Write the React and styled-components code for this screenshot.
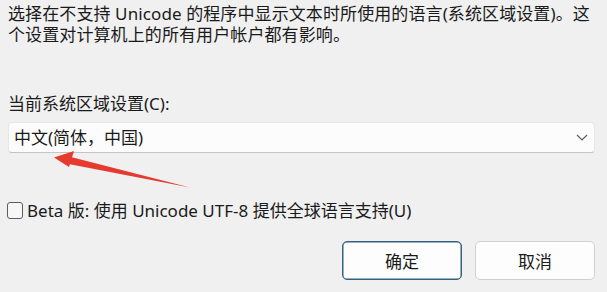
import React, { useState } from 'react';
import styled, { createGlobalStyle } from 'styled-components';

const GlobalStyle = createGlobalStyle`
  html, body {
    margin: 0;
    padding: 0;
    background: #f0f0f0;
  }
  body {
    font-family: "Noto Sans", "Noto Sans CJK SC", sans-serif;
    color: #1a1a1a;
  }
`;

// Dialog body
const Dialog = styled.div`
  position: relative;
  width: 607px;
  height: 292px;
  box-sizing: border-box;
  padding: 3px 12px 0 8px;
  background: #f0f0f0;
  font-size: 17px;
  overflow: hidden;
`;

const Description = styled.p`
  margin: 0;
  line-height: 21px;
  white-space: nowrap;
  letter-spacing: 0.1px;
`;

const FieldLabel = styled.label`
  display: block;
  margin-top: 48px;
  line-height: 21px;
`;

const Select = styled.div`
  display: flex;
  align-items: center;
  justify-content: space-between;
  box-sizing: border-box;
  height: 31px;
  margin-top: 8px;
  padding: 0 6px 0 5px;
  background: #fcfcfc;
  border: 1px solid #e6e6e6;
  border-bottom-color: #c4c4c4;
  border-radius: 4px;
  line-height: 21px;
`;

const CheckRow = styled.label`
  display: flex;
  align-items: center;
  gap: 4px;
  margin-top: 47px;
  height: 21px;
  line-height: 21px;
  cursor: pointer;
`;

const Box = styled.span`
  width: 16px;
  height: 17px;
  margin-left: -1px;
  box-sizing: border-box;
  border: 1px solid #5c5c5c;
  border-radius: 3px;
  background: ${(p) => (p.checked ? '#005fb8' : '#f6f6f6')};
`;

const ButtonRow = styled.div`
  display: flex;
  justify-content: flex-end;
  gap: 13px;
  margin-top: 20px;
`;

const Button = styled.button`
  width: 120px;
  height: 39px;
  box-sizing: border-box;
  border-radius: 5px;
  border: 1px solid ${(p) => (p.primary ? '#33627f' : '#d0d0d0')};
  box-shadow: ${(p) => (p.primary ? 'inset 0 0 0 0.5px #33627f' : 'none')};
  background: #fdfdfd;
  font-family: inherit;
  font-size: 17px;
  color: #1a1a1a;
  padding: 0;
`;

// red annotation arrow drawn over the dialog
const ArrowLayer = styled.svg`
  position: absolute;
  left: 0;
  top: 0;
  pointer-events: none;
`;

const Chevron = () => (
  <svg width="12" height="7" viewBox="0 0 12 7">
    <path d="M1 1 L6 6 L11 1" fill="none" stroke="#5a5a5a" strokeWidth="1.1" />
  </svg>
);

const App = () => {
  const [checked, setChecked] = useState(false);

  return (
    <>
      <GlobalStyle />
      <Dialog>
        <Description>
          选择在不支持 Unicode 的程序中显示文本时所使用的语言(系统区域设置)。这
          <br />
          个设置对计算机上的所有用户帐户都有影响。
        </Description>

        <FieldLabel>当前系统区域设置(C):</FieldLabel>
        <Select>
          <span>中文(简体，中国)</span>
          <Chevron />
        </Select>

        <CheckRow onClick={() => setChecked(!checked)}>
          <Box checked={checked} />
          <span>Beta 版: 使用 Unicode UTF-8 提供全球语言支持(U)</span>
        </CheckRow>

        <ButtonRow>
          <Button primary>确定</Button>
          <Button>取消</Button>
        </ButtonRow>

        <ArrowLayer width="607" height="292">
          <polygon points="67,156 66,163.5 190,187.5" fill="#e63a2e" />
          <polygon points="54,157.5 74,151 69,167" fill="#e63a2e" />
        </ArrowLayer>
      </Dialog>
    </>
  );
};

export default App;
